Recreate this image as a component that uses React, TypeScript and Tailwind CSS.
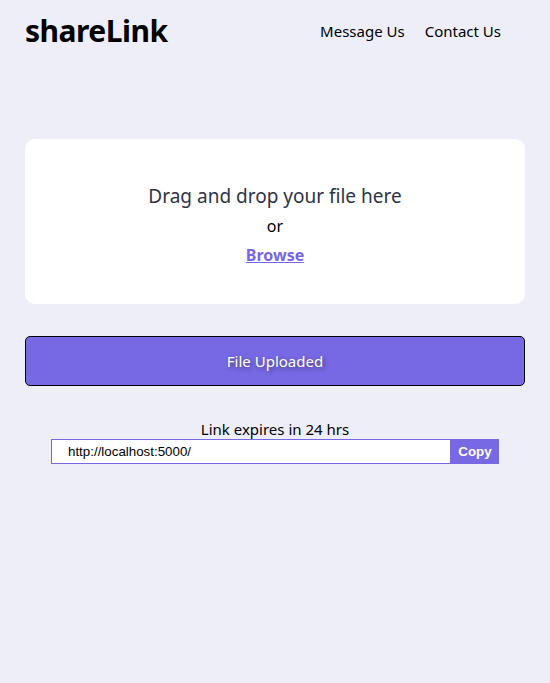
export default function App() {
  return (
    <div className="min-h-[683px] bg-[#eeeef8] text-black" style={{ fontFamily: '"Noto Sans", "Open Sans", sans-serif' }}>
      <header className="flex items-center justify-between pl-[25px] pr-[49px] h-[62px]">
        <h1 className="text-[30px] font-bold leading-none tracking-[-0.5px]">shareLink</h1>
        <nav className="flex gap-[20px] text-[15px]">
          <a>Message Us</a>
          <a>Contact Us</a>
        </nav>
      </header>
      <main className="px-[25px] pt-[77px]">
        <div className="bg-white rounded-[10px] h-[165px] flex flex-col items-center justify-center pt-[5px]">
          <p className="text-[19px] text-[#2d3348] leading-[28px]">Drag and drop your file here</p>
          <p className="text-[16px] mt-[4px] leading-[24px]">or</p>
          <a className="text-[16px] font-bold underline text-[#7668e4] mt-[5px] leading-[24px]">Browse</a>
        </div>
        <button className="mt-[32px] w-full h-[50px] rounded-[5px] border border-black bg-[#7769e4] text-white text-[15px] [text-shadow:2px_2px_5px_rgba(0,0,0,0.45)]">
          File Uploaded
        </button>
        <div className="mt-[33px] flex flex-col items-center">
          <p className="text-[15px] leading-[20px]">Link expires in 24 hrs</p>
          <div className="flex w-[448px] h-[25px]" style={{ fontFamily: '"Liberation Sans", Arial, sans-serif' }}>
            <div className="flex-1 border border-[#7769e4] bg-white pl-[16px] text-[13.33px] leading-[23px]">http://localhost:5000/</div>
            <button className="w-[48px] bg-[#7769e4] text-white text-[13.33px] font-bold">Copy</button>
          </div>
        </div>
      </main>
    </div>
  );
}
